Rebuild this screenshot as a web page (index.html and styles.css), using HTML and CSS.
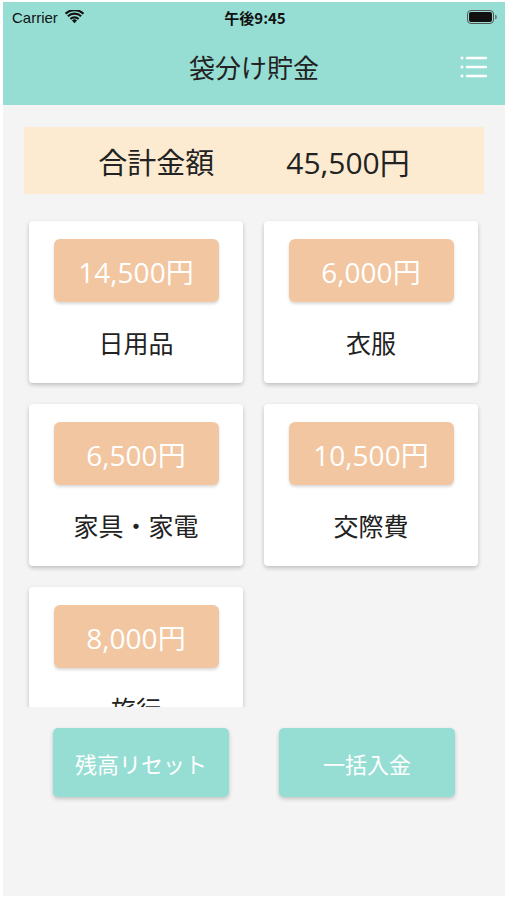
FILE: index.html
```html
<!DOCTYPE html>
<html>
<head>
    <title>袋分け貯金</title>
    <link rel="stylesheet" href="styles.css">
</head>
<body>
    <div class="phone">
        <div class="header">
            <div class="status-bar">
                <div class="carrier">
                    Carrier
                    <svg class="wifi" width="19" height="14" viewBox="0 0 18 13">
                        <path d="M9 12.5 L6.6 9.9 A3.4 3.4 0 0 1 11.4 9.9 Z" fill="#111"/>
                        <path d="M4.4 7.6 A6.6 6.6 0 0 1 13.6 7.6 L12.2 9.1 A4.6 4.6 0 0 0 5.8 9.1 Z" fill="#111"/>
                        <path d="M2 5.1 A10 10 0 0 1 16 5.1 L14.6 6.6 A8 8 0 0 0 3.4 6.6 Z" fill="#111"/>
                        <path d="M-0.2 2.7 A13.2 13.2 0 0 1 18.2 2.7 L16.8 4.2 A11.2 11.2 0 0 0 1.2 4.2 Z" fill="#111"/>
                    </svg>
                </div>
                <div class="time">午後9:45</div>
                <div class="battery">
                    <svg width="31" height="14" viewBox="0 0 31 14">
                        <rect x="0.5" y="0.5" width="26" height="13" rx="3.5" fill="none" stroke="#555" stroke-width="1"/>
                        <rect x="2" y="2" width="23" height="10" rx="2" fill="#111"/>
                        <path d="M28 4.5 Q30 5 30 7 Q30 9 28 9.5 Z" fill="#777"/>
                    </svg>
                </div>
            </div>
            <div class="nav-bar">
                <h1 class="title">袋分け貯金</h1>
                <svg class="menu-icon" width="27" height="22" viewBox="0 0 27 22">
                    <circle cx="2" cy="2" r="1.5" fill="#fff"/>
                    <circle cx="2" cy="11" r="1.5" fill="#fff"/>
                    <circle cx="2" cy="20" r="1.5" fill="#fff"/>
                    <line x1="7" y1="2" x2="26" y2="2" stroke="#fff" stroke-width="2.4" stroke-linecap="round"/>
                    <line x1="7" y1="11" x2="26" y2="11" stroke="#fff" stroke-width="2.4" stroke-linecap="round"/>
                    <line x1="7" y1="20" x2="26" y2="20" stroke="#fff" stroke-width="2.4" stroke-linecap="round"/>
                </svg>
            </div>
        </div>

        <div class="total">
            <span class="total-label">合計金額</span>
            <span class="total-value">45,500円</span>
        </div>

        <div class="scroll">
            <div class="bag-grid">
                <div class="bag-card">
                    <div class="amount">14,500円</div>
                    <div class="bag-name">日用品</div>
                </div>
                <div class="bag-card">
                    <div class="amount">6,000円</div>
                    <div class="bag-name">衣服</div>
                </div>
                <div class="bag-card">
                    <div class="amount">6,500円</div>
                    <div class="bag-name">家具・家電</div>
                </div>
                <div class="bag-card">
                    <div class="amount">10,500円</div>
                    <div class="bag-name">交際費</div>
                </div>
                <div class="bag-card">
                    <div class="amount">8,000円</div>
                    <div class="bag-name">旅行</div>
                </div>
            </div>
        </div>

        <div class="actions">
            <button class="action-button">残高リセット</button>
            <button class="action-button">一括入金</button>
        </div>
    </div>
</body>
</html>
```

FILE: styles.css
```css
body {
    margin: 0;
    padding: 0;
    background-color: #ffffff;
    font-family: "Noto Sans CJK JP", sans-serif;
    color: #222222;
}

.phone {
    margin: 2px 0 0 3px;
    width: 502px;
    height: 894px;
    background-color: #F4F4F4;
    display: flex;
    flex-direction: column;
    overflow: hidden;
}

.header {
    background-color: #96DED4;
    height: 103px;
    display: flex;
    flex-direction: column;
}

.status-bar {
    height: 30px;
    display: flex;
    align-items: center;
    padding: 0 7px 0 9px;
}

.carrier {
    flex: 1;
    display: flex;
    align-items: center;
    gap: 7px;
    font-family: "Liberation Sans", Arial, sans-serif;
    font-size: 15px;
    color: #111111;
}

.time {
    font-size: 15px;
    font-weight: bold;
    color: #111111;
}

.battery {
    flex: 1;
    display: flex;
    justify-content: flex-end;
}

.nav-bar {
    flex: 1;
    display: flex;
    align-items: center;
    justify-content: center;
    position: relative;
    padding-bottom: 4px;
}

.title {
    margin: 0;
    font-size: 26px;
    font-weight: normal;
    color: #222222;
}

.menu-icon {
    position: absolute;
    right: 18px;
    top: 24px;
}

.total {
    margin: 22px 21px 0 21px;
    height: 67px;
    background-color: #FCEBD0;
    display: flex;
    align-items: center;
    justify-content: center;
    gap: 72px;
    color: #222222;
}

.total-label {
    font-size: 29px;
}

.total-value {
    font-family: "Open Sans", "Noto Sans CJK JP", sans-serif;
    font-size: 30px;
}

.scroll {
    height: 513px;
    overflow: hidden;
}

.bag-grid {
    display: grid;
    grid-template-columns: 214px 214px;
    grid-auto-rows: 162px;
    column-gap: 21px;
    row-gap: 21px;
    padding: 27px 0 0 26px;
}

.bag-card {
    background-color: #ffffff;
    border-radius: 4px;
    box-shadow: 0 2px 4px rgba(0, 0, 0, 0.22);
    display: flex;
    flex-direction: column;
    align-items: center;
    padding-top: 18px;
    box-sizing: border-box;
}

.amount {
    width: 165px;
    height: 63px;
    background-color: #F2C6A0;
    border-radius: 6px;
    box-shadow: 0 2px 3px rgba(0, 0, 0, 0.15);
    color: #ffffff;
    font-family: "Open Sans", "Noto Sans CJK JP", sans-serif;
    font-size: 28px;
    display: flex;
    align-items: center;
    justify-content: center;
}

.bag-name {
    margin-top: 23px;
    font-size: 25px;
    line-height: 34px;
    color: #222222;
}

.actions {
    display: flex;
    justify-content: center;
    gap: 50px;
    margin-top: 21px;
}

.action-button {
    width: 176px;
    height: 69px;
    background-color: #96DED4;
    color: #ffffff;
    border: none;
    border-radius: 5px;
    box-shadow: 0 2px 4px rgba(0, 0, 0, 0.2);
    font-family: "Noto Sans CJK JP", sans-serif;
    font-size: 22px;
    cursor: pointer;
}
```
